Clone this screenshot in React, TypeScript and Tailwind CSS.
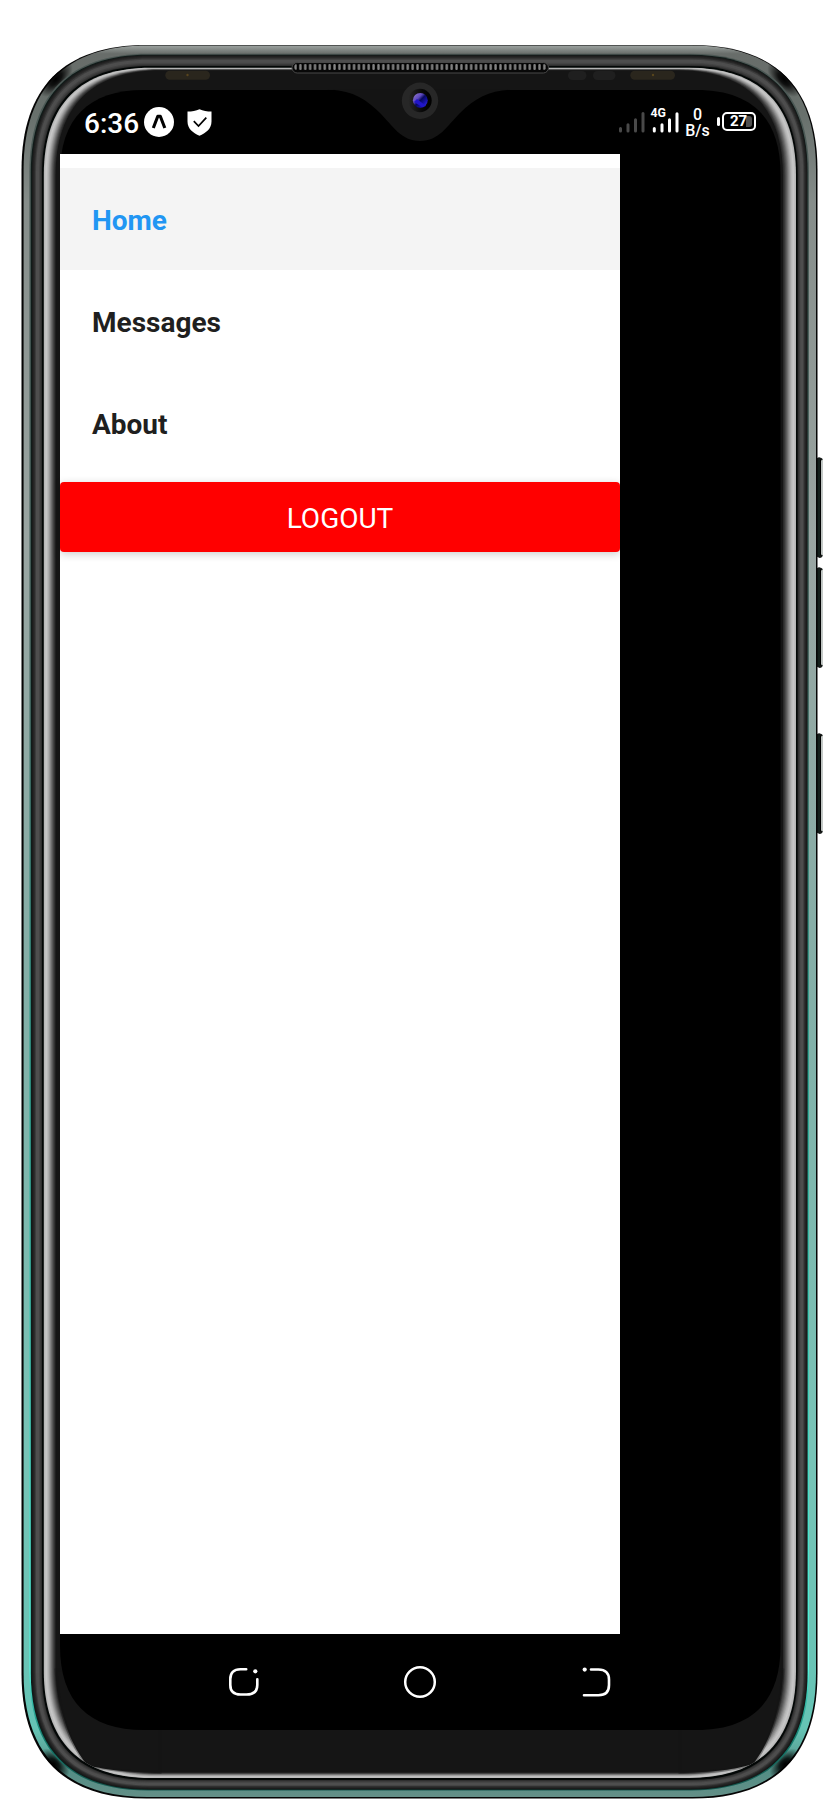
import React from "react";

type Box = { l: number; t: number; r: number; b: number; e: number };

const outline = ({ l, t, r, b, e }: Box, k = 0.66) => {
  const h = e * (1 - k);
  return `M${l} ${t + e}C${l} ${t + h} ${l + h} ${t} ${l + e} ${t}H${r - e}C${r - h} ${t} ${r} ${t + h} ${r} ${t + e}V${b - e}C${r} ${b - h} ${r - h} ${b} ${r - e} ${b}H${l + e}C${l + h} ${b} ${l} ${b - h} ${l} ${b - e}Z`;
};

const lerp = (a: number, b: number, f: number) => a + (b - a) * f;

function Band({ from, to, steps, shades }: { from: Box; to: Box; steps: number; shades: number[] }) {
  return (
    <>
      {Array.from({ length: steps }, (_, i) => {
        const f = i / steps;
        const p = f * (shades.length - 1);
        const n = Math.floor(p);
        const s = Math.round(lerp(shades[n], shades[Math.min(n + 1, shades.length - 1)], p - n));
        const box = {
          l: lerp(from.l, to.l, f),
          t: lerp(from.t, to.t, f),
          r: lerp(from.r, to.r, f),
          b: lerp(from.b, to.b, f),
          e: lerp(from.e, to.e, f),
        };
        return <path key={i} d={outline(box)} fill={`rgb(${s},${s},${s})`} />;
      })}
    </>
  );
}

const SHELL: Box = { l: 21.5, t: 45, r: 817.5, b: 1798.6, e: 125 };
const METAL: Box = { l: 23.6, t: 45.4, r: 816, b: 1797, e: 124 };
const SEAM: Box = { l: 29.4, t: 53.8, r: 809, b: 1790.5, e: 118 };
const SEAM_EDGE: Box = { l: 30.8, t: 54.8, r: 807.6, b: 1789.7, e: 117.5 };
const RING: Box = { l: 32, t: 55.4, r: 807, b: 1789, e: 117 };
const GROOVE: Box = { l: 42, t: 66, r: 797.6, b: 1780, e: 108 };
const RIM: Box = { l: 43.8, t: 67.8, r: 796, b: 1778, e: 107 };
const GLASS: Box = { l: 55.5, t: 70.2, r: 783, b: 1772.5, e: 106 };
const SCREEN: Box = { l: 60, t: 90, r: 780.5, b: 1730, e: 84 };

const TAPER_LEFT = "M56 1670C59 1716 72 1747 88 1766C102 1768 118 1772.5 160 1772.5V1670Z";
const TAPER_RIGHT = "M783 1670C780 1716 768 1745 753 1764C739 1768 722 1772.5 680 1772.5V1670Z";

function Handset() {
  return (
    <svg className="absolute inset-0" width="840" height="1820" viewBox="0 0 840 1820" aria-hidden="true">
      <defs>
        <linearGradient id="metal" gradientUnits="userSpaceOnUse" x1="0" y1="45" x2="0" y2="1798">
          <stop offset="0" stopColor="#a0a6a3" />
          <stop offset="0.005" stopColor="#686d6a" />
          <stop offset="0.04" stopColor="#68706c" />
          <stop offset="0.09" stopColor="#868d8a" />
          <stop offset="0.28" stopColor="#9aa5a2" />
          <stop offset="0.55" stopColor="#83b0a8" />
          <stop offset="0.8" stopColor="#78c4b7" />
          <stop offset="0.96" stopColor="#65c4b5" />
          <stop offset="0.985" stopColor="#548e85" />
          <stop offset="1" stopColor="#648f87" />
        </linearGradient>
        <linearGradient id="seam" x1="0" y1="0" x2="0" y2="1">
          <stop offset="0" stopColor="#4c5754" />
          <stop offset="0.35" stopColor="#4c6c66" />
          <stop offset="0.6" stopColor="#31a795" />
          <stop offset="0.93" stopColor="#55f3dc" />
          <stop offset="0.97" stopColor="#147c6e" />
          <stop offset="1" stopColor="#17574f" />
        </linearGradient>
        <radialGradient id="shade">
          <stop offset="0" stopColor="#000" />
          <stop offset="0.35" stopColor="#000" stopOpacity="0.85" />
          <stop offset="1" stopColor="#000" stopOpacity="0" />
        </radialGradient>
        <linearGradient id="key" x1="0" y1="0" x2="1" y2="0">
          <stop offset="0" stopColor="#101c18" />
          <stop offset="0.54" stopColor="#16211d" />
          <stop offset="0.62" stopColor="#000" />
          <stop offset="0.7" stopColor="#bcc2bf" />
          <stop offset="1" stopColor="#c8cdcb" />
        </linearGradient>
        <linearGradient id="lens" x1="0" y1="0" x2="1" y2="1">
          <stop offset="0" stopColor="#9a82c9" />
          <stop offset="0.35" stopColor="#5d48c0" />
          <stop offset="0.5" stopColor="#07085c" />
          <stop offset="0.72" stopColor="#1712ae" />
          <stop offset="1" stopColor="#4531f2" />
        </linearGradient>
        <linearGradient id="well" x1="0" y1="0" x2="1" y2="0">
          <stop offset="0" stopColor="#272727" />
          <stop offset="0.6" stopColor="#080808" />
          <stop offset="1" stopColor="#000" />
        </linearGradient>
        <clipPath id="shell">
          <path d={outline(SHELL)} />
        </clipPath>
        <clipPath id="rim">
          <path d={outline(RIM)} />
        </clipPath>
        <pattern id="grille" width="4.88" height="8" patternUnits="userSpaceOnUse" x="294" y="64">
          <rect width="4.88" height="8" fill="#000" />
          <rect x="0.3" width="2.4" height="6" rx="1" fill="#858585" />
        </pattern>
      </defs>

      {[458, 568, 734].map((y) => (
        <g key={y}>
          <rect x="816.5" y={y} width="6.5" height="99" rx="1.5" fill="url(#key)" />
          <path d={`M817 ${y + 1.5}Q820 ${y - 1} 822 ${y + 2}M817 ${y + 97}Q820 ${y + 101} 822 ${y + 97}`} stroke="#161a18" strokeWidth="2" fill="none" />
        </g>
      ))}

      <path d={outline(SHELL)} fill="#050505" />
      <path d={outline(METAL)} fill="url(#metal)" />
      <g clipPath="url(#shell)">
        <ellipse cx="56" cy="79" rx="22" ry="11" transform="rotate(-48 56 79)" fill="url(#shade)" />
        <ellipse cx="784" cy="79" rx="22" ry="11" transform="rotate(48 784 79)" fill="url(#shade)" />
        <ellipse cx="54" cy="1764" rx="19" ry="11" transform="rotate(46 54 1764)" fill="url(#shade)" />
        <ellipse cx="785" cy="1764" rx="19" ry="11" transform="rotate(-46 785 1764)" fill="url(#shade)" />
      </g>
      <path d={outline(SEAM)} fill="url(#seam)" />
      <path d={outline(SEAM_EDGE)} fill="#101b19" />
      <Band from={RING} to={GROOVE} steps={10} shades={[28, 44, 78, 78, 58, 34]} />
      <path d={outline(GROOVE)} fill="#030706" />
      <Band from={RIM} to={GLASS} steps={12} shades={[182, 200, 180, 142, 98, 58, 28]} />
      <path d={outline(GLASS)} fill="#151515" />
      <g clipPath="url(#rim)" fill="#151515" stroke="#151515" strokeOpacity="0.35" strokeWidth="3">
        <path d={TAPER_LEFT} />
        <path d={TAPER_RIGHT} />
      </g>

      <path d={outline(SCREEN)} fill="#000" />
      <path d="M326 89.5C350 90 364 97 380 113C393 126 401 141 420 141C439 141 447 126 460 113C476 97 490 90 514 89.5Z" fill="#141414" />

      <rect x="292" y="62.5" width="256.5" height="10.5" rx="5.2" fill="#080808" stroke="#494949" strokeWidth="1" />
      <rect x="294" y="64" width="252.5" height="6" rx="3" fill="url(#grille)" />
      <g>
        <rect x="165.3" y="70.8" width="44.7" height="9" rx="4.5" fill="#2a261d" />
        <circle cx="187.5" cy="75" r="1.2" fill="#58451d" />
        <rect x="568" y="71" width="18.5" height="9" rx="4.5" fill="#1f1f1f" />
        <rect x="593" y="71" width="22.5" height="9" rx="4.5" fill="#1f1f1f" />
        <rect x="630.3" y="70.8" width="44.7" height="9" rx="4.5" fill="#2a261d" />
        <circle cx="653" cy="75" r="1.2" fill="#58451d" />
      </g>
      <circle cx="420" cy="100.8" r="18.2" fill="#272727" />
      <circle cx="420" cy="100.5" r="11.7" fill="url(#well)" />
      <circle cx="420.3" cy="100.3" r="7.4" fill="url(#lens)" />
      <path d="M414 102L417 99L426 106L422 107Z" fill="#2115c9" />
    </svg>
  );
}

function StatusBar() {
  return (
    <header className="flex h-16 items-start justify-between pl-[24px] pr-[24.5px] text-white">
      <div className="flex pt-[16px]">
        <span className="w-[60px] pt-px text-[28px] leading-[34px] font-medium whitespace-nowrap">6:36</span>
        <svg className="mt-px" width="30" height="30" viewBox="0 0 30 30" fill="none">
          <circle cx="15" cy="15" r="15" fill="#fff" />
          <path d="M9.3 21L13.8 9.2H16.3L20.8 21" stroke="#000" strokeWidth="3.1" strokeLinejoin="round" />
        </svg>
        <svg className="mt-[2.5px] ml-[13px]" width="25" height="27" viewBox="0 0 25 27" fill="none">
          <path d="M12.5 0.3C16 1.9 20 2.6 24.5 2.6V12.5C24.5 20 18.5 24.2 12.5 26.7C6.5 24.2 0.5 20 0.5 12.5V2.6C5 2.6 9 1.9 12.5 0.3Z" fill="#fff" />
          <path d="M6.8 12.2L11.5 17L19.3 8.6" stroke="#000" strokeWidth="1.7" />
        </svg>
      </div>
      <div className="flex items-start">
        <svg width="61" height="44" viewBox="0 0 61 44" fill="none">
          <g stroke="#494949" strokeWidth="3" strokeLinecap="round">
            <path d="M2.5 38.5V41M10 34.7V41M17.5 29.7V41M25 23.5V41" />
          </g>
          <g stroke="#fff" strokeWidth="3" strokeLinecap="round">
            <path d="M36.3 38.5V41M44 34.7V41M51.5 29.7V41M59 23.8V41" />
          </g>
          <text x="32.5" y="26.8" fill="#fff" fontFamily="Roboto, sans-serif" fontSize="13.5" fontWeight="700" textLength="15.5" lengthAdjust="spacingAndGlyphs">4G</text>
        </svg>
        <div className="ml-[5px] flex w-7 flex-col items-center pt-[17px] text-[16px] leading-[16px] font-medium">
          <span>0</span>
          <span>B/s</span>
        </div>
        <div className="mt-[22px] ml-[5px] flex items-center gap-[2px]">
          <i className="h-[9px] w-[3px] rounded-sm bg-white" />
          <div className="relative flex h-[19px] w-[34px] items-center justify-center rounded-[5px] border-2 border-white text-[15px] leading-none font-bold">
            <i className="absolute top-0.5 right-0.5 bottom-0.5 w-[6px] rounded-r-[3px] bg-[#505050]" />
            <span className="relative">27</span>
          </div>
        </div>
      </div>
    </header>
  );
}

const LINKS = ["Home", "Messages", "About"];

export default function App() {
  return (
    <div className="relative h-[1820px] w-[840px] overflow-hidden bg-white font-[Roboto,sans-serif]">
      <Handset />
      <main className="relative flex h-full w-full flex-col px-[60px] pt-[90px]">
        <StatusBar />
        <aside className="h-[1480px] w-[560px] bg-white pt-[14px]">
          <nav>
            {LINKS.map((label, i) => (
              <a
                key={label}
                className={
                  i === 0
                    ? "flex h-[102px] items-center bg-[#f4f4f4] px-8 pt-[4px] text-[28px] font-bold text-[#2196f3]"
                    : "flex h-[102px] items-center px-8 pt-[4px] text-[28px] font-bold text-[#1f1f20]"
                }
              >
                {label}
              </a>
            ))}
          </nav>
          <button className="mt-[8px] flex h-[70px] w-full items-center justify-center rounded-[4px] bg-[#ff0000] pt-[3px] text-[28px] text-white shadow-[0_2px_8px_rgba(0,0,0,0.2)]">
            LOGOUT
          </button>
        </aside>
        <footer className="flex h-24 items-center justify-between px-[168px]">
          <svg width="32" height="32" viewBox="0 0 32 32" fill="none" stroke="#fff" strokeWidth="2.6" strokeLinecap="round">
            <path d="M18.2 3.2H12.5C5.5 3.2 2.3 7 2.3 13V19C2.3 25 5.5 28.5 12.5 28.5H18.5C25.5 28.5 29.3 25 29.3 19V13.3" />
            <circle cx="27.3" cy="5.3" r="2.1" fill="#fff" stroke="none" />
          </svg>
          <svg width="34" height="34" viewBox="0 0 34 34" fill="none">
            <circle cx="17" cy="17" r="14.8" stroke="#fff" strokeWidth="2.5" />
          </svg>
          <svg width="32" height="32" viewBox="0 0 32 32" fill="none" stroke="#fff" strokeWidth="2.6" strokeLinecap="round">
            <path d="M11 3.5H18.5C25.5 3.5 29 7.5 29 13.5V19C29 25.5 25.5 29.2 18.5 29.2H4" />
            <circle cx="4.7" cy="3.6" r="2.1" fill="#fff" stroke="none" />
          </svg>
        </footer>
      </main>
    </div>
  );
}
